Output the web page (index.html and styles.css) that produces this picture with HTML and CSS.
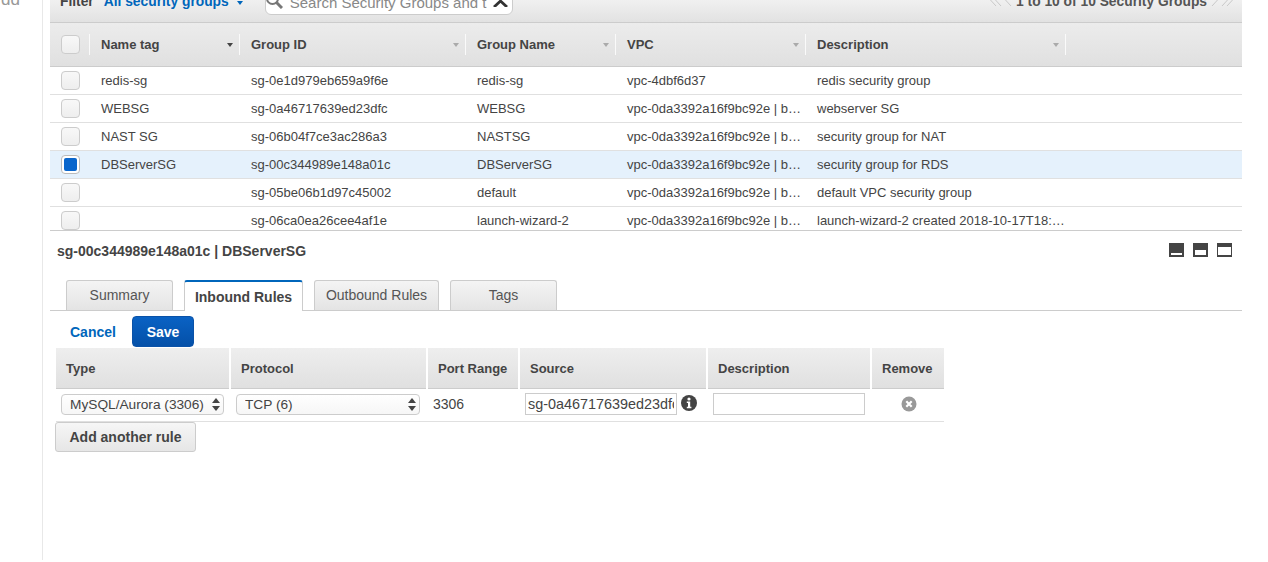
FILE: index.html
```html
<!DOCTYPE html>
<html>
<head>
<title>Security Groups</title>
<link rel="stylesheet" href="styles.css">
</head>
<body>

<div class="sidebar"><span class="side-link">dd</span></div>

<div class="main">

  <div class="toolbar">
    <span class="filter-label">Filter</span>
    <span class="filter-value">All security groups</span>
    <span class="caret-blue"></span>
    <div class="search">
      <svg class="search-icon" width="17" height="17" viewBox="0 0 17 17"><circle cx="6.500" cy="6.500" r="5.500" fill="none" stroke="#777" stroke-width="2"/><path d="M10.500 10.500l5.500 5.500" stroke="#777" stroke-width="3"/></svg>
      <span class="search-text">Search Security Groups and t</span>
      <svg class="search-x" width="15" height="14" viewBox="0 0 15 14"><path d="M1 0l6.500 6L14 0M1 14l6.500-6 6.500 6" fill="none" stroke="#333" stroke-width="2.800"/></svg>
    </div>
    <div class="pager">
      <svg class="pager-arrows" width="22" height="12" viewBox="0 0 22 12"><path d="M6 0L0.500 6 6 12M11 0L5.500 6 11 12M21 0l-5.500 6 5.500 6" fill="none" stroke="#c8c8c8" stroke-width="1"/></svg>
      <span class="pager-text">1 to 10 of 10 Security Groups</span>
      <svg class="pager-arrows" width="22" height="12" viewBox="0 0 22 12"><path d="M1 0l5.500 6L1 12M11 0l5.500 6L11 12M16 0l5.500 6-5.500 6" fill="none" stroke="#c8c8c8" stroke-width="1"/></svg>
    </div>
  </div>

  <div class="grid-wrap">
    <table class="grid">
      <colgroup>
        <col class="c-check"><col class="c-name"><col class="c-id"><col class="c-gname"><col class="c-vpc"><col class="c-desc"><col>
      </colgroup>
      <thead>
        <tr>
          <th><span class="cb"></span></th>
          <th><div class="th-in">Name tag<i class="sort dark"></i></div></th>
          <th><div class="th-in">Group ID<i class="sort"></i></div></th>
          <th><div class="th-in">Group Name<i class="sort"></i></div></th>
          <th><div class="th-in">VPC<i class="sort"></i></div></th>
          <th><div class="th-in">Description<i class="sort"></i></div></th>
          <th class="th-last"></th>
        </tr>
      </thead>
      <tbody>
        <tr><td><span class="cb"></span></td><td>redis-sg</td><td>sg-0e1d979eb659a9f6e</td><td>redis-sg</td><td>vpc-4dbf6d37</td><td>redis security group</td><td></td></tr>
        <tr><td><span class="cb"></span></td><td>WEBSG</td><td>sg-0a46717639ed23dfc</td><td>WEBSG</td><td>vpc-0da3392a16f9bc92e | b…</td><td>webserver SG</td><td></td></tr>
        <tr><td><span class="cb"></span></td><td>NAST SG</td><td>sg-06b04f7ce3ac286a3</td><td>NASTSG</td><td>vpc-0da3392a16f9bc92e | b…</td><td>security group for NAT</td><td></td></tr>
        <tr class="selected"><td><span class="cb on"></span></td><td>DBServerSG</td><td>sg-00c344989e148a01c</td><td>DBServerSG</td><td>vpc-0da3392a16f9bc92e | b…</td><td>security group for RDS</td><td></td></tr>
        <tr><td><span class="cb"></span></td><td></td><td>sg-05be06b1d97c45002</td><td>default</td><td>vpc-0da3392a16f9bc92e | b…</td><td>default VPC security group</td><td></td></tr>
        <tr><td><span class="cb"></span></td><td></td><td>sg-06ca0ea26cee4af1e</td><td>launch-wizard-2</td><td>vpc-0da3392a16f9bc92e | b…</td><td>launch-wizard-2 created 2018-10-17T18:…</td><td></td></tr>
      </tbody>
    </table>
  </div>

  <div class="detail-head">
    <span class="detail-title">sg-00c344989e148a01c | DBServerSG</span>
    <div class="win-icons">
      <span class="win"><i class="w1"></i></span>
      <span class="win"><i class="w2"></i></span>
      <span class="win"><i class="w3"></i></span>
    </div>
  </div>

  <div class="tabs">
    <span class="tab">Summary</span>
    <span class="tab active">Inbound Rules</span>
    <span class="tab">Outbound Rules</span>
    <span class="tab">Tags</span>
  </div>

  <div class="actions">
    <a class="cancel">Cancel</a>
    <button class="save">Save</button>
  </div>

  <table class="rules">
    <colgroup>
      <col class="r-type"><col class="r-proto"><col class="r-port"><col class="r-source"><col class="r-desc"><col class="r-remove">
    </colgroup>
    <thead>
      <tr><th>Type</th><th>Protocol</th><th>Port Range</th><th>Source</th><th>Description</th><th>Remove</th></tr>
    </thead>
    <tbody>
      <tr>
        <td class="cell-type">
          <div class="sel sel-type"><select><option>MySQL/Aurora (3306)</option></select><i class="updown"></i></div>
        </td>
        <td class="cell-proto">
          <div class="sel sel-proto"><select><option>TCP (6)</option></select><i class="updown"></i></div>
        </td>
        <td class="cell-port">3306</td>
        <td class="cell-source">
          <input class="txt" type="text" value="sg-0a46717639ed23dfc">
          <svg class="info" width="16" height="16" viewBox="0 0 16 16"><circle cx="8" cy="8" r="8" fill="#444"/><circle cx="8" cy="4" r="1.600" fill="#fff"/><path d="M5.800 6.600h3.400v5.200h1.200v1.400H5.800v-1.400H7V8H5.800z" fill="#fff"/></svg>
        </td>
        <td class="cell-desc"><input class="txt desc" type="text"></td>
        <td class="cell-remove">
          <svg width="16" height="16" viewBox="0 0 16 16"><circle cx="8" cy="8" r="7.500" fill="#999"/><path d="M5.300 5.300l5.400 5.400M10.700 5.300l-5.400 5.400" stroke="#fff" stroke-width="2.200"/></svg>
        </td>
      </tr>
    </tbody>
  </table>

  <button class="add-rule">Add another rule</button>

</div>

</body>
</html>
```

FILE: styles.css
```css
html, body {
  margin: 0;
  height: 562px;
  overflow: hidden;
  background: #fff;
}

body {
  display: flex;
  font-family: "Liberation Sans", Arial, sans-serif;
  font-size: 13px;
  color: #444;
}

.sidebar {
  width: 42px;
  height: 560px;
  border-right: 1px solid #e8e8e8;
  overflow: hidden;
}

.side-link {
  display: block;
  margin-top: -10px;
  text-align: right;
  padding-right: 22px;
  font-size: 17px;
  color: #999;
}

.main {
  width: 1192px;
  margin-left: 7px;
}

/* top filter bar, cut by the window edge */
.toolbar {
  height: 23px;
  display: flex;
  align-items: flex-end;
  box-sizing: border-box;
  border-bottom: 1px solid #ccc;
  background: linear-gradient(#f0f0f0, #e2e2e2);
  overflow: hidden;
  font-size: 13.800px;
}

.filter-label {
  margin-left: 10px;
  font-weight: bold;
  line-height: 16px;
  padding-bottom: 12px;
  flex: none;
}

.filter-value {
  margin-left: 10px;
  font-weight: bold;
  color: #0066bb;
  line-height: 16px;
  padding-bottom: 12px;
  flex: none;
}

.caret-blue {
  margin: 0 0 17px 8px;
  border: 3px solid transparent;
  border-top: 4px solid #0066bb;
  border-bottom: 0;
  flex: none;
}

.search {
  margin-left: 22px;
  margin-bottom: 7px;
  width: 248px;
  height: 30px;
  flex: none;
  box-sizing: border-box;
  display: flex;
  align-items: center;
  padding: 4px 4px 0 0;
  background: #fff;
  border: 1px solid #ccc;
  border-radius: 6px;
}

.search-icon {
  flex: none;
  margin-bottom: 4px;
}

.search-text {
  margin-left: 7px;
  font-size: 15px;
  color: #888;
  white-space: nowrap;
  overflow: hidden;
  width: 198px;
  flex: none;
}

.search-x {
  margin-left: 5px;
  margin-bottom: 4px;
  flex: none;
}

.pager {
  margin-left: auto;
  margin-right: 9px;
  padding-bottom: 12px;
  display: flex;
  align-items: center;
  gap: 4px;
  line-height: 16px;
}

.pager-arrows {
  margin-bottom: 4px;
}

.pager-text {
  font-weight: bold;
  color: #555;
}

/* security group list */
.grid-wrap {
  height: 207px;
  overflow: hidden;
  border-bottom: 1px solid #ccc;
}

.grid {
  width: 100%;
  table-layout: fixed;
  border-collapse: collapse;
}

.c-check { width: 40px; }
.c-name { width: 150px; }
.c-id { width: 226px; }
.c-gname { width: 150px; }
.c-vpc { width: 190px; }
.c-desc { width: 260px; }

.grid th {
  height: 43px;
  padding: 0;
  text-align: left;
  font-weight: bold;
  background: linear-gradient(#ececec, #e0e0e0);
  border-bottom: 1px solid #ccc;
  color: #444;
}

.grid th:first-child,
.grid td:first-child {
  padding-left: 11px;
}

.grid th:first-child {
  position: relative;
}

.grid th:first-child::after {
  content: "";
  position: absolute;
  right: 0;
  top: 11px;
  height: 21px;
  border-right: 1px solid #fafafa;
}

.th-in {
  display: flex;
  align-items: center;
  justify-content: space-between;
  height: 21px;
  padding: 0 6px 0 11px;
  border-right: 1px solid #fafafa;
}

.sort {
  border: 3.500px solid transparent;
  border-top: 4px solid #aaa;
  border-bottom: 0;
}

.sort.dark {
  border-top-color: #444;
}

.grid td {
  height: 27px;
  padding: 0 0 0 11px;
  border-bottom: 1px solid #e0e0e0;
  white-space: nowrap;
  overflow: hidden;
}

.grid .selected td {
  background: #e5f1fc;
}

.cb {
  display: block;
  box-sizing: border-box;
  width: 19px;
  height: 19px;
  border: 1px solid #ccc;
  border-radius: 4px;
  background: linear-gradient(#f8f8f8, #eee);
}

.cb.on {
  background: #fff;
  border-color: #bbb;
  position: relative;
}

.cb.on::after {
  content: "";
  position: absolute;
  left: 2px;
  top: 2px;
  width: 13px;
  height: 13px;
  border-radius: 2px;
  background: #0a66cc;
}

/* detail pane */
.detail-head {
  height: 49px;
  display: flex;
  align-items: flex-start;
  justify-content: space-between;
  padding: 12px 10px 0 7px;
  box-sizing: border-box;
}

.detail-title {
  font-size: 14px;
  font-weight: bold;
  line-height: 16px;
  color: #444;
}

.win-icons {
  display: flex;
  gap: 9px;
}

.win {
  position: relative;
  display: block;
  width: 15px;
  height: 14px;
  background: #444;
}

.win i {
  position: absolute;
  background: #fff;
  left: 2px;
  right: 2px;
  bottom: 2px;
}

.win .w1 { height: 2px; }
.win .w2 { height: 5px; }
.win .w3 { height: 8px; left: 1px; right: 1px; }

.tabs {
  height: 31px;
  box-sizing: border-box;
  display: flex;
  align-items: flex-end;
  gap: 11px;
  padding-left: 16px;
  border-bottom: 1px solid #ccc;
}

.tab {
  height: 30px;
  box-sizing: border-box;
  display: flex;
  align-items: center;
  justify-content: center;
  width: 107px;
  padding-bottom: 2px;
  border: 1px solid #ccc;
  border-bottom: 0;
  border-radius: 3px 3px 0 0;
  background: linear-gradient(#f4f4f4, #e4e4e4);
  font-size: 14px;
  color: #555;
}

.tab:nth-child(3) { width: 125px; }

.tab.active {
  width: 119px;
  height: 31px;
  margin-bottom: -1px;
  padding: 1px 0 0;
  background: #fff;
  border-top: 2px solid #0066bb;
  font-weight: bold;
  color: #444;
}

.actions {
  height: 37px;
  display: flex;
  align-items: flex-start;
  padding: 5px 0 0 20px;
  box-sizing: border-box;
}

.cancel {
  margin-top: 8px;
  width: 62px;
  font-size: 14px;
  font-weight: bold;
  line-height: 16px;
  color: #0066bb;
}

.save {
  width: 62px;
  height: 31px;
  padding: 0;
  border: 1px solid #0a52a8;
  border-radius: 4px;
  background: linear-gradient(#0a62c4, #0450a8);
  color: #fff;
  font-family: inherit;
  font-size: 14px;
  font-weight: bold;
}

/* inbound rules */
.rules {
  width: 888px;
  margin-left: 6px;
  table-layout: fixed;
  border-collapse: collapse;
}

.r-type { width: 174px; }
.r-proto { width: 197px; }
.r-port { width: 92px; }
.r-source { width: 188px; }
.r-desc { width: 164px; }
.r-remove { width: 73px; }

.rules th {
  height: 40px;
  padding: 0 0 0 10px;
  text-align: left;
  font-weight: bold;
  background: linear-gradient(#eeeeee, #e0e0e0);
  border-left: 2px solid #fff;
  border-bottom: 1px solid #ccc;
}

.rules th:first-child {
  border-left: 0;
}

.rules td {
  height: 30px;
  padding: 0 0 2px;
  border-bottom: 1px solid #e0e0e0;
}

.cell-type { padding-left: 5px !important; }
.cell-proto { padding-left: 6px !important; }
.cell-port { padding-left: 6px !important; font-size: 14px; }
.cell-source { padding-left: 6px !important; white-space: nowrap; }
.cell-desc { padding-left: 6px !important; }
.cell-remove { text-align: center; padding-left: 2px !important; }

.cell-source,
.cell-remove {
  line-height: 0;
}

.sel {
  position: relative;
  height: 21px;
}

.sel-type { width: 163px; }
.sel-proto { width: 184px; }

.sel select {
  display: block;
  appearance: none;
  width: 100%;
  height: 21px;
  padding: 0 0 0 8px;
  border: 1px solid #ccc;
  border-radius: 4px;
  background: linear-gradient(#fff, #f6f6f6);
  font-family: inherit;
  font-size: 13.700px;
  color: #444;
}

.updown {
  position: absolute;
  right: 4px;
  top: 4px;
  width: 8px;
  height: 13px;
}

.updown::before,
.updown::after {
  content: "";
  position: absolute;
  left: 0;
  border: 4px solid transparent;
}

.updown::before {
  top: 0;
  border-top: 0;
  border-bottom: 5px solid #444;
}

.updown::after {
  bottom: 0;
  border-bottom: 0;
  border-top: 5px solid #444;
}

.txt {
  box-sizing: border-box;
  width: 152px;
  height: 22px;
  padding: 0 2px;
  border: 1px solid #ccc;
  border-radius: 0;
  font-family: inherit;
  font-size: 14.400px;
  color: #444;
  vertical-align: middle;
}

.info {
  margin: 0 0 3px 0;
  vertical-align: middle;
}

.add-rule {
  display: block;
  width: 141px;
  height: 30px;
  margin: 0 0 0 5px;
  padding: 0;
  border: 1px solid #ccc;
  border-radius: 3px;
  background: linear-gradient(#f6f6f6, #e6e6e6);
  font-family: inherit;
  font-size: 14px;
  font-weight: bold;
  color: #444;
}
```
